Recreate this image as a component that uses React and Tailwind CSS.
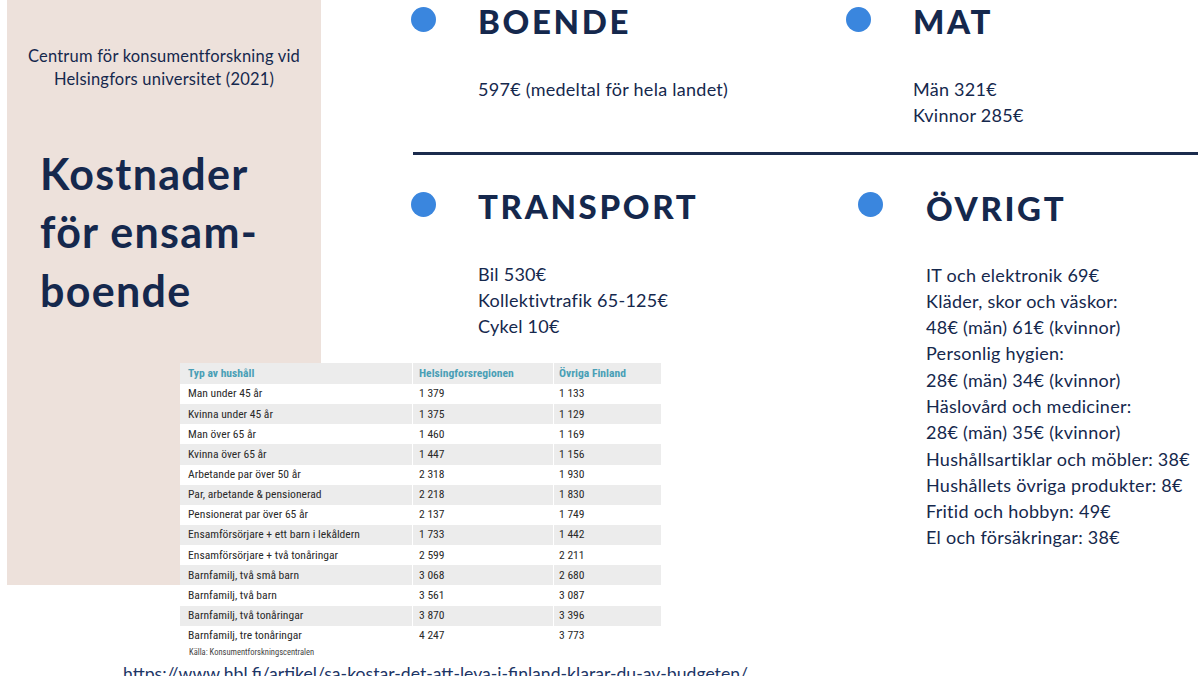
import React from "react";

const navy = "text-[#15284d]";

const rows = [
  ["Man under 45 år", "1 379", "1 133"],
  ["Kvinna under 45 år", "1 375", "1 129"],
  ["Man över 65 år", "1 460", "1 169"],
  ["Kvinna över 65 år", "1 447", "1 156"],
  ["Arbetande par över 50 år", "2 318", "1 930"],
  ["Par, arbetande & pensionerad", "2 218", "1 830"],
  ["Pensionerat par över 65 år", "2 137", "1 749"],
  ["Ensamförsörjare + ett barn i lekåldern", "1 733", "1 442"],
  ["Ensamförsörjare + två tonåringar", "2 599", "2 211"],
  ["Barnfamilj, två små barn", "3 068", "2 680"],
  ["Barnfamilj, två barn", "3 561", "3 087"],
  ["Barnfamilj, två tonåringar", "3 870", "3 396"],
  ["Barnfamilj, tre tonåringar", "4 247", "3 773"],
];

function Bullet({ offset }) {
  return <div className={`w-[25px] h-[25px] rounded-full bg-[#3a86de] shrink-0 ${offset}`} />;
}

function Heading({ children }) {
  return (
    <div className={`text-[33px] leading-[40px] font-black tracking-[0.08em] ${navy}`}>
      {children}
    </div>
  );
}

function Body({ lines, mt }) {
  return (
    <div className={`${mt} text-[18px] leading-[26.3px] tracking-[0.015em] ${navy}`}>
      {lines.map((l) => (
        <div key={l}>{l}</div>
      ))}
    </div>
  );
}

export default function App() {
  return (
    <div
      className="relative w-[1198px] h-[676px] overflow-hidden bg-white flex"
      style={{ fontFamily: "Lato, 'Noto Sans', sans-serif" }}
    >
      {/* Left panel */}
      <div className="ml-[7px] w-[314px] h-[585px] shrink-0 bg-[#ede1db] flex flex-col">
        <div className={`mt-[44.5px] text-center text-[16.5px] leading-[23px] tracking-[0.012em] ${navy}`}>
          <div>Centrum för konsumentforskning vid</div>
          <div>Helsingfors universitet (2021)</div>
        </div>
        <div className={`mt-[54px] pl-[33px] text-[43px] leading-[58.5px] font-bold tracking-[0.03em] ${navy}`}>
          <div>Kostnader</div>
          <div>för ensam-</div>
          <div>boende</div>
        </div>
      </div>

      {/* Right area */}
      <div className="flex-1 flex flex-col">
        <div className="h-[152px] flex pt-[1px]">
          <div className="ml-[90px] w-[435px] flex">
            <Bullet offset="mt-[5.5px]" />
            <div className="ml-[42px]">
              <Heading>BOENDE</Heading>
              <Body mt="mt-[34.5px]" lines={["597€ (medeltal för hela landet)"]} />
            </div>
          </div>
          <div className="flex">
            <Bullet offset="mt-[5.5px]" />
            <div className="ml-[42px]">
              <Heading>MAT</Heading>
              <Body mt="mt-[34.5px]" lines={["Män 321€", "Kvinnor 285€"]} />
            </div>
          </div>
        </div>
        <div className="ml-[92px] h-[3px] bg-[#1b2b4d]" />
        <div className="flex pt-[31px]">
          <div className="ml-[90px] w-[447px] flex">
            <Bullet offset="mt-[6.3px]" />
            <div className="ml-[42px]">
              <Heading>TRANSPORT</Heading>
              <Body mt="mt-[34.5px]" lines={["Bil 530€", "Kollektivtrafik 65-125€", "Cykel 10€"]} />
            </div>
          </div>
          <div className="flex pt-[2px]">
            <Bullet offset="mt-[4.3px]" />
            <div className="ml-[43px]">
              <Heading>ÖVRIGT</Heading>
              <Body
                mt="mt-[33.5px]"
                lines={[
                  "IT och elektronik 69€",
                  "Kläder, skor och väskor:",
                  "48€ (män) 61€ (kvinnor)",
                  "Personlig hygien:",
                  "28€ (män) 34€ (kvinnor)",
                  "Häslovård och mediciner:",
                  "28€ (män) 35€ (kvinnor)",
                  "Hushållsartiklar och möbler: 38€",
                  "Hushållets övriga produkter: 8€",
                  "Fritid och hobbyn: 49€",
                  "El och försäkringar: 38€",
                ]}
              />
            </div>
          </div>
        </div>
      </div>

      {/* Table overlapping the panel */}
      <div
        className="absolute left-[180px] top-[363px] w-[481px] bg-white text-[11.6px] text-[#2a2a2a]"
        style={{ fontFamily: "'Liberation Sans Narrow', 'Roboto Condensed', 'Liberation Sans', sans-serif" }}
      >
        <div className="flex h-[21px] items-center bg-[#ececec] font-bold text-[#4a9fb6]">
          <div className="w-[232px] pl-[8px]">Typ av hushåll</div>
          <div className="w-[141px] pl-[6px] border-l border-white h-full flex items-center">Helsingforsregionen</div>
          <div className="flex-1 pl-[5px] border-l border-white h-full flex items-center">Övriga Finland</div>
        </div>
        {rows.map((r, i) => (
          <div
            key={r[0]}
            className={`flex h-[20.15px] items-center ${i % 2 === 1 ? "bg-[#ececec]" : "bg-white"}`}
          >
            <div className="w-[232px] pl-[8px]">{r[0]}</div>
            <div className="w-[141px] pl-[6px] border-l border-white h-full flex items-center">{r[1]}</div>
            <div className="flex-1 pl-[5px] border-l border-white h-full flex items-center">{r[2]}</div>
          </div>
        ))}
        <div className="pl-[9px] text-[8.5px] leading-[12px] text-[#444]">Källa: Konsumentforskningscentralen</div>
      </div>

      <div className="absolute left-[123px] top-[661px] text-[17.6px] leading-[26px] text-[#1c3566] whitespace-nowrap">
        https://www.hbl.fi/artikel/sa-kostar-det-att-leva-i-finland-klarar-du-av-budgeten/
      </div>
    </div>
  );
}
